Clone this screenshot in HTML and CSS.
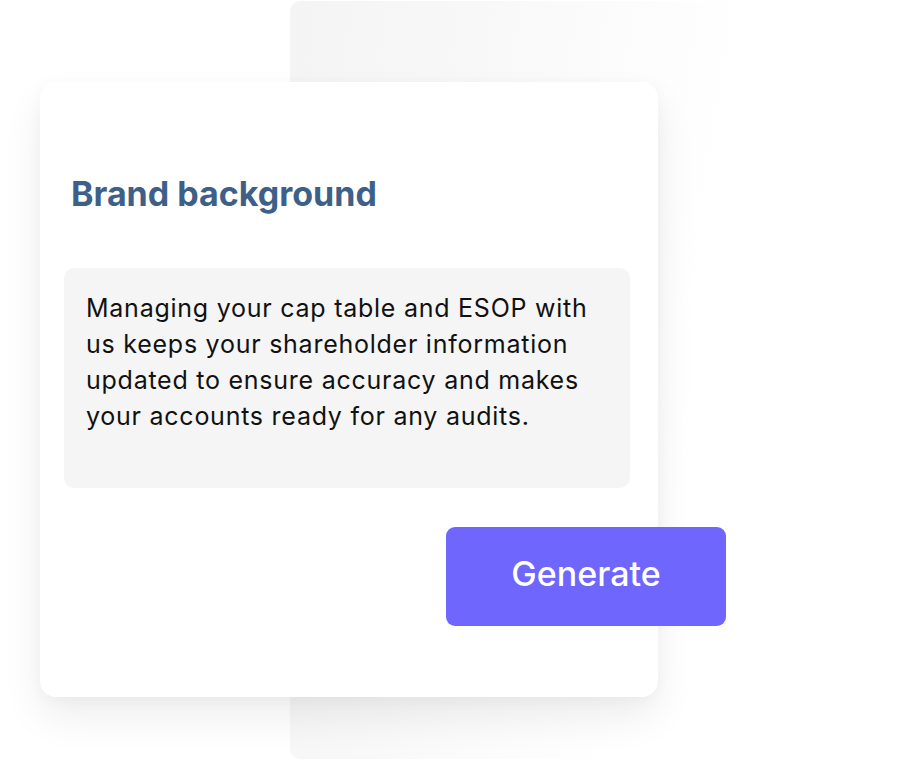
FILE: index.html
```html
<!DOCTYPE html>
<html>
<head>
<meta charset="utf-8">
<link rel="stylesheet" href="styles.css">
</head>
<body>
<div class="backdrop"></div>
<div class="card">
  <h2 class="title">Brand background</h2>
  <div class="note">
    <p>Managing your cap table and ESOP with us keeps your shareholder information updated to ensure accuracy and makes your accounts ready for any audits.</p>
  </div>
  <div class="actions">
    <button class="generate">Generate</button>
  </div>
</div>
</body>
</html>
```

FILE: styles.css
```css
html, body {
  margin: 0;
  padding: 0;
  background: #ffffff;
  width: 920px;
  height: 761px;
  overflow: hidden;
}
body {
  position: relative;
  font-family: Inter, "Liberation Sans", sans-serif;
  padding-top: 82px;
  padding-left: 40px;
  box-sizing: border-box;
}
.backdrop {
  position: absolute;
  left: 290px;
  top: 1px;
  width: 630px;
  height: 758px;
  border-radius: 10px 0 0 10px;
  background: linear-gradient(100deg, #f4f4f4 0%, #f8f8f8 25%, #fcfcfc 45%, #ffffff 62%);
  z-index: 0;
}
.card {
  position: relative;
  z-index: 1;
  width: 618px;
  height: 615px;
  box-sizing: border-box;
  background: #ffffff;
  border-radius: 16px;
  box-shadow: 0 20px 40px rgba(0, 0, 0, 0.07), 0 4px 16px rgba(0, 0, 0, 0.03);
  padding: 92px 28px 0 24px;
}
.title {
  margin: 0 0 0 7px;
  font-size: 34px;
  line-height: 40px;
  font-weight: 700;
  color: #3e5f88;
}
.note {
  margin-top: 54px;
  width: 566px;
  height: 220px;
  box-sizing: border-box;
  background: #f5f5f5;
  border-radius: 10px;
  padding: 22px 30px 0 22px;
}
.note p {
  margin: 0;
  font-family: Inter, "Liberation Sans", sans-serif;
  font-size: 25px;
  line-height: 36px;
  letter-spacing: 0.75px;
  color: #111111;
}
.actions {
  display: flex;
  justify-content: flex-end;
  margin-top: 39px;
  margin-right: -96px;
}
.generate {
  width: 280px;
  height: 99px;
  border: none;
  border-radius: 9px;
  background: #6f66fd;
  color: #ffffff;
  font-family: Inter, "Liberation Sans", sans-serif;
  font-size: 34px;
  font-weight: 500;
  padding: 0 0 6px 0;
}
```
